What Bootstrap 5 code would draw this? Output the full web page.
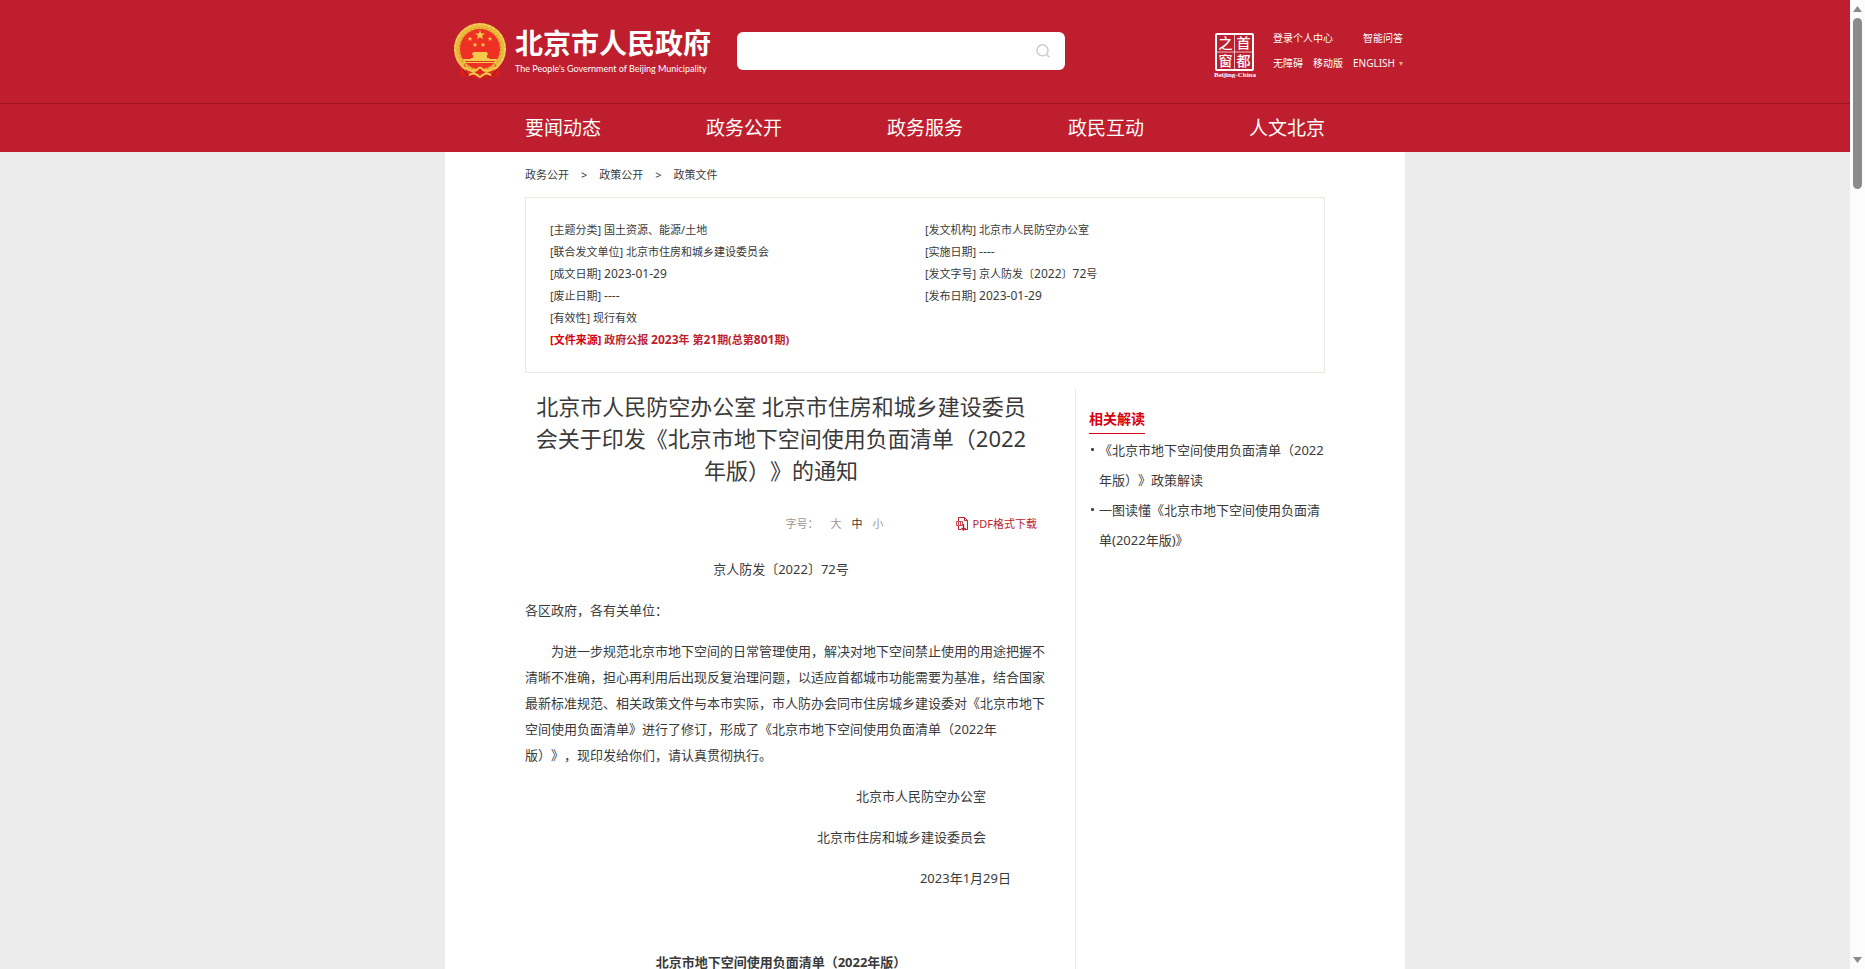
<!DOCTYPE html>
<html lang="zh-CN">
<head>
<meta charset="utf-8">
<meta name="viewport" content="width=device-width, initial-scale=1">
<title>北京市人民政府</title>
<link href="https://cdn.jsdelivr.net/npm/bootstrap@5.3.0/dist/css/bootstrap.min.css" rel="stylesheet">
<style>
  :root { --gov-red: #be1e2d; }
  body { font-family: "Noto Sans", "Noto Sans CJK SC", sans-serif; font-size: 13px; line-height: 26px; color: #3a3a3a; text-spacing-trim: space-all; }
  a, a:hover { color: inherit; text-decoration: none; }
  h1, h2, p, dl, ul { margin: 0; }
  .page-scroll { background: #ececec; }
  .wrap-wide { max-width: 960px; }
  .wrap-inner { max-width: 800px; }

  .site-head { background: var(--gov-red); border-bottom: 1px solid #9c1421; height: 104px; }
  .brand { width: 292px; padding-left: 8px; gap: 8px; }
  .emblem { margin-top: 22px; }
  .brand-text { margin-top: 26px; }
  .brand-name { font-size: 28px; line-height: 34px; font-weight: 700; }
  .brand-en { font-family: Lato, sans-serif; font-size: 9px; line-height: 18px; white-space: nowrap; }
  .search-box { width: 328px; height: 38px; border-radius: 6px; background: #fff; margin-top: 32px; }
  .search-box input { font-size: 13px; }
  .search-box .form-control:focus { box-shadow: none; }
  .search-box button { padding: 0 15px; }
  .head-tools { padding-right: 2px; }
  .seal { margin-top: 32px; }
  .seal-text { font-family: "Noto Sans CJK SC", sans-serif; font-weight: 500; }
  .quick { width: 130px; margin-top: 26px; font-size: 10px; line-height: 25px; white-space: nowrap; }
  .main-nav { background: var(--gov-red); font-size: 19px; line-height: 48px; }

  .crumbs { font-size: 11px; line-height: 45px; gap: 12px; }
  .meta-box { border: 1px solid #e9e9e0; padding: 21px 24px; font-size: 11px; line-height: 22px; }
  .meta-box .num { font-size: 12px; }
  .src { color: var(--gov-red); font-weight: 700; }
  .src-label { color: #d8000f; }

  .article { width: 520px; }
  .article-head { padding-right: 8px; }
  .article-title { font-size: 22px; line-height: 32px; font-weight: 400; padding: 17px 4px 0; text-align: center; }
  .tools { margin-top: 27px; font-size: 11px; color: #999; line-height: 22px; }
  .tools button { border: 0; background: none; padding: 0; color: inherit; }
  .tools .active-size { color: #333; }
  .sizes { gap: 10px; margin-left: 12px; }
  .pdf { color: var(--gov-red); margin-left: 72px; }
  .doc { padding-top: 21px; }
  .doc p { margin-bottom: 15px; }
  .doc .centered, .doc .signed { padding-right: 8px; }
  .doc .signed { text-align: right; }
  .doc .unit { padding-right: 59px; }
  .doc .dated { padding-right: 34px; }
  .doc .blank { height: 28px; }
  .side { border-left: 1px solid #e9e9e0; margin-top: 16px; padding: 17px 0 0 13px; width: 250px; }
  .side h2 { font-size: 14px; line-height: 26px; font-weight: 700; color: #d8000f; border-bottom: 1px solid #d8000f; padding-bottom: 1px; width: fit-content; }
  .side ul { line-height: 30px; padding: 0; margin-top: 1px; list-style: none; }
  .side li { display: flex; gap: 5px; }
  .side li::before { content: ""; flex: none; width: 3px; height: 3px; margin: 13px 0 0 2px; background: #444; border-radius: 1px; }

  .bar { width: 15px; background: #fcfcfc; }
  .bar-thumb { width: 9px; height: 171px; border-radius: 5px; background: #8b8b8b; margin-top: 6px; }
</style>
</head>
<body>
<div class="d-flex vh-100 overflow-hidden">
  <div class="page-scroll flex-grow-1 overflow-hidden d-flex flex-column">
    <header class="site-head flex-shrink-0 text-white">
      <div class="wrap-wide mx-auto d-flex align-items-start">
        <a href="#" class="brand d-flex align-items-start flex-shrink-0">
          <svg class="emblem flex-shrink-0" width="54" height="58" viewBox="0 0 54 58" aria-hidden="true">
            <path d="M8 40l-1 13 6 2 3 1 6-1 5 2 5-2 6 1 3-1 6-2-1-13z" fill="#d8201c"/>
            <path d="M9 45l5 9m31-9l-5 9M17 56l3-4m17 4l-3-4" stroke="#9c1218" fill="none"/>
            <circle cx="27" cy="27" r="23" fill="#ee3124" stroke="#edb93c" stroke-width="6"/>
            <circle cx="27" cy="27" r="25" fill="none" stroke="#ffe08a" stroke-dasharray="3 2"/>
            <circle cx="27" cy="27" r="21" fill="none" stroke="#c98a1f" stroke-dasharray="2 2"/>
            <g fill="#f5c94c">
              <path d="M27 8l1.300 3.400 3.700.1-2.900 2.300 1 3.500-3.100-2-3.100 2 1-3.500-2.900-2.300 3.700-.1z"/>
              <path id="star" d="M17 14.500l.7 1.400 1.500.2-1.100 1.100.3 1.500-1.400-.7-1.400.7.3-1.500-1.100-1.100 1.500-.2z"/>
              <use href="#star" x="20"/><use href="#star" x="5" y="6"/><use href="#star" x="13" y="6"/>
              <path d="M20 30h14l1 3h-1v3h2l1 2H17l1-2h2v-3h-1z"/>
              <path d="M10 37h34l-1 4H11z"/>
            </g>
            <path d="M12 39.500h30" stroke="#d7372a"/>
            <path d="M11 42q6 8 12 6 2-4 4-4t4 4q6 2 12-6l-2 8q-5 2-8 0-3 3-6 3t-6-3q-3 2-8 0z" fill="#e0261d"/>
            <path d="M12 45q6 6 12 3 3-5 6 0 6 3 12-3M16 53l5-2 6 4 6-4 5 2" stroke="#f5c94c" stroke-width="2" fill="none"/>
          </svg>
          <span class="brand-text d-flex flex-column">
            <span class="brand-name">北京市人民政府</span>
            <span class="brand-en">The People's Government of Beijing Municipality</span>
          </span>
        </a>
        <form class="search-box d-flex flex-shrink-0" role="search" onsubmit="return false">
          <input class="form-control border-0 bg-transparent" type="text" aria-label="搜索">
          <button class="btn border-0" type="submit" aria-label="搜索">
            <svg class="d-block" width="14" height="14" viewBox="0 0 14 14" fill="none" stroke="#ccc" stroke-width="1.500"><circle cx="6.500" cy="6.300" r="5.500"/><path d="M10.300 10.300l3.200 3"/></svg>
          </button>
        </form>
        <div class="head-tools d-flex ms-auto">
          <a href="#" class="seal flex-shrink-0" aria-label="首都之窗">
            <svg class="d-block" width="44" height="46" viewBox="0 0 44 46" fill="#fff">
              <rect x="3" y="2" width="37" height="36" rx="1" fill="none" stroke="#fff" stroke-width="2"/>
              <path d="M21.500 3v34M4 20h35" stroke="#fff" stroke-opacity=".7"/>
              <g class="seal-text" font-size="14" text-anchor="middle">
                <text x="12.500" y="16">之</text><text x="30.500" y="16">首</text>
                <text x="12.500" y="34">窗</text><text x="30.500" y="34">都</text>
              </g>
              <text x="22" y="45" font-size="7" font-weight="700" font-family="Liberation Serif, serif" text-anchor="middle">Beijing-China</text>
            </svg>
          </a>
          <div class="quick ms-3">
            <div class="d-flex justify-content-between"><a href="#">登录个人中心</a><a href="#">智能问答</a></div>
            <div class="d-flex justify-content-between"><a href="#">无障碍</a><a href="#">移动版</a>
              <a href="#" class="d-flex align-items-center gap-1">ENGLISH<svg width="4" height="4" viewBox="0 0 4 4"><path d="M0 0h4L2 4z" fill="#e0b080"/></svg></a>
            </div>
          </div>
        </div>
      </div>
    </header>
    <nav class="main-nav flex-shrink-0 text-white">
      <div class="wrap-inner mx-auto d-flex justify-content-between">
        <a href="#">要闻动态</a><a href="#">政务公开</a><a href="#">政务服务</a><a href="#">政民互动</a><a href="#">人文北京</a>
      </div>
    </nav>
    <main class="wrap-wide w-100 mx-auto bg-white flex-grow-1 d-flex flex-column">
      <div class="wrap-inner w-100 mx-auto flex-grow-1 d-flex flex-column">
        <nav class="crumbs d-flex" aria-label="位置">
          <a href="#">政务公开</a><span>&gt;</span><a href="#">政策公开</a><span>&gt;</span><a href="#">政策文件</a>
        </nav>
        <section class="meta-box">
          <div class="row g-0">
            <div class="col-6">
              <div>[主题分类] 国土资源、能源/土地</div>
              <div>[联合发文单位] 北京市住房和城乡建设委员会</div>
              <div>[成文日期] <span class="num">2023-01-29</span></div>
              <div>[废止日期] <span class="num">----</span></div>
              <div>[有效性] 现行有效</div>
              <div class="src"><span class="src-label">[文件来源]</span> <a href="#">政府公报 <span class="num">2023</span>年 第<span class="num">21</span>期(总第<span class="num">801</span>期)</a></div>
            </div>
            <div class="col-6">
              <div>[发文机构] 北京市人民防空办公室</div>
              <div>[实施日期] <span class="num">----</span></div>
              <div>[发文字号] 京人防发〔<span class="num">2022</span>〕<span class="num">72</span>号</div>
              <div>[发布日期] <span class="num">2023-01-29</span></div>
            </div>
          </div>
        </section>
        <div class="d-flex justify-content-between flex-grow-1">
          <article class="article">
            <div class="article-head">
              <h1 class="article-title">北京市人民防空办公室 北京市住房和城乡建设委员会关于印发《北京市地下空间使用负面清单（2022年版）》的通知</h1>
              <div class="tools d-flex justify-content-end align-items-center">
                <span>字号：</span>
                <span class="sizes d-flex"><button type="button">大</button><button type="button" class="active-size">中</button><button type="button">小</button></span>
                <a href="#" class="pdf d-flex align-items-center gap-1">
                  <svg width="13" height="14" viewBox="0 0 13 14" fill="none" stroke="#be1e2d"><path d="M2.500 4V.5h6l3 3v9H9M8.500.5v3h3M2.500 9v3.500H5"/><path d="M.5 4.500h6v4h-6zM2.500 5v3M4.500 5v3" stroke-width=".8"/><path d="M7.500 7v6M5.500 11l2 2 2-2" stroke-width="1.400"/></svg>PDF格式下载</a>
              </div>
            </div>
            <div class="doc">
              <p class="centered text-center">京人防发〔2022〕72号</p>
              <p>各区政府，各有关单位：</p>
              <p>　　为进一步规范北京市地下空间的日常管理使用，解决对地下空间禁止使用的用途把握不清晰不准确，担心再利用后出现反复治理问题，以适应首都城市功能需要为基准，结合国家最新标准规范、相关政策文件与本市实际，市人防办会同市住房城乡建设委对《北京市地下空间使用负面清单》进行了修订，形成了《北京市地下空间使用负面清单（2022年版）》，现印发给你们，请认真贯彻执行。</p>
              <p class="signed unit">北京市人民防空办公室</p>
              <p class="signed unit">北京市住房和城乡建设委员会</p>
              <p class="signed dated">2023年1月29日</p>
              <p class="blank"></p>
              <p class="centered text-center fw-bold">北京市地下空间使用负面清单（2022年版）</p>
            </div>
          </article>
          <aside class="side">
            <h2>相关解读</h2>
            <ul>
              <li><a href="#">《北京市地下空间使用负面清单（2022年版）》政策解读</a></li>
              <li><a href="#">一图读懂《北京市地下空间使用负面清单(2022年版)》</a></li>
            </ul>
          </aside>
        </div>
      </div>
    </main>
  </div>
  <div class="bar flex-shrink-0 d-flex flex-column align-items-center" aria-hidden="true">
    <svg width="9" height="12" viewBox="0 0 9 12" class="flex-shrink-0"><path d="M4.500 6L9 12H0z" fill="#8b8b8b"/></svg>
    <div class="bar-thumb"></div>
    <svg width="9" height="12" viewBox="0 0 9 12" class="mt-auto flex-shrink-0"><path d="M4.500 6L9 0H0z" fill="#8b8b8b"/></svg>
  </div>
</div>
<script src="https://cdn.jsdelivr.net/npm/bootstrap@5.3.0/dist/js/bootstrap.bundle.min.js"></script>
</body>
</html>
